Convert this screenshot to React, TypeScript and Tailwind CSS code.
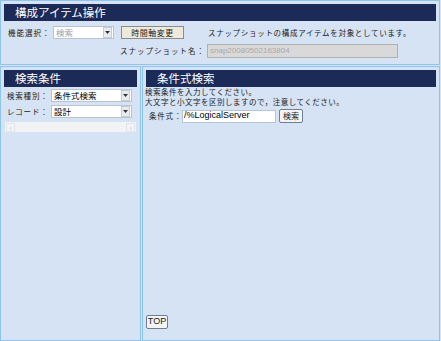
import React from "react";

const jp = { fontFamily: '"Noto Sans CJK JP", "Noto Sans", sans-serif' };
const lat = { fontFamily: '"Liberation Sans", Arial, sans-serif' };

function Select({ value, w, disabled }: { value: string; w: string; disabled?: boolean }) {
  return (
    <div className={`flex h-[13px] shrink-0 items-center border border-[#b8c4d2] bg-white ${w}`}>
      <span className={`flex-1 overflow-hidden pl-[2px] text-[8.5px] leading-[11px] ${disabled ? "text-[#a0a0a0]" : "text-black"}`}>{value}</span>
      <span className="mr-[1px] flex h-[11px] w-[9px] items-center justify-center border border-[#c5ccd6] bg-[#e8ebef]">
        <svg width="5" height="3" viewBox="0 0 5 3"><path d="M0 0h5L2.5 3z" fill="#333" /></svg>
      </span>
    </div>
  );
}

function Header({ title }: { title: string }) {
  return (
    <div className="mx-[3px] mt-[3px] flex h-[17px] items-center bg-[#1c2a57] pl-[11px] text-[11.5px] leading-none text-white">
      {title}
    </div>
  );
}

export default function App() {
  return (
    <div className="h-[341px] w-[441px] overflow-hidden bg-[#d5e3f4] text-[8px] text-[#222]" style={jp}>
      {/* top panel */}
      <div className="h-[65px] w-[440px] border border-[#8ec5ee]">
        <Header title="構成アイテム操作" />
        <div className="mt-[5px] flex items-center whitespace-nowrap">
          <span className="ml-[7px] w-[45px] shrink-0 text-[7.5px] tracking-[1px]">機能選択：</span>
          <Select value="検索" w="w-[61px]" disabled />
          <div className="ml-[7px] flex h-[13px] w-[63px] shrink-0 items-center justify-center border border-[#8c8c8c] bg-[#efe9da] text-[8px] tracking-[0.5px]">時間軸変更</div>
          <span className="ml-[24px] text-[7.5px] tracking-[0.7px]">スナップショットの構成アイテムを対象としています。</span>
        </div>
        <div className="mt-[5px] flex items-center whitespace-nowrap">
          <span className="ml-[119px] w-[87px] shrink-0 text-[7.5px] tracking-[1px]">スナップショット名：</span>
          <div className="flex h-[14px] w-[191px] shrink-0 items-center border border-[#b0b0b0] bg-[#d9d9d9] pl-[2px] text-[8px] text-[#a9a9a9]" style={lat}>
            snap20080502163804
          </div>
        </div>
      </div>
      {/* bottom */}
      <div className="mt-[1px] flex h-[275px]">
        <div className="h-full w-[141px] shrink-0 border border-[#8ec5ee]">
          <Header title="検索条件" />
          <div className="mt-[2px] flex items-center whitespace-nowrap">
            <span className="ml-[6px] w-[44px] shrink-0 text-[7.5px] tracking-[0.8px]">検索種別：</span>
            <Select value="条件式検索" w="w-[81px]" />
          </div>
          <div className="mt-[3px] flex items-center whitespace-nowrap">
            <span className="ml-[6px] w-[44px] shrink-0 text-[7.5px] tracking-[0.8px]">レコード：</span>
            <Select value="設計" w="w-[81px]" />
          </div>
          <div className="mx-[4px] mt-[4px] flex h-[10px] items-center justify-between bg-[#f1f3f5]">
            <span className="ml-[1px] flex h-[9px] w-[9px] items-center justify-center border border-[#e2e6ea] text-[7px] leading-none text-[#c0c0c0]">‹</span>
            <span className="mr-[1px] flex h-[9px] w-[9px] items-center justify-center border border-[#e2e6ea] text-[7px] leading-none text-[#c0c0c0]">›</span>
          </div>
        </div>
        <div className="ml-[1px] flex h-full w-[298px] flex-col border border-[#8ec5ee]">
          <Header title="条件式検索" />
          <div className="whitespace-nowrap pl-[2px] text-[7.5px] leading-[10px] tracking-[0.5px]">
            <div>検索条件を入力してください。</div>
            <div>大文字と小文字を区別しますので，注意してください。</div>
          </div>
          <div className="mt-[2px] flex items-center whitespace-nowrap">
            <span className="ml-[6px] w-[33px] shrink-0 text-[7.5px] tracking-[0.8px]">条件式：</span>
            <div className="flex h-[13px] w-[94px] shrink-0 items-center border border-[#b8c4d2] bg-white pl-[1px] text-[9px] text-black" style={lat}>
              /%LogicalServer
            </div>
            <div className="ml-[3px] flex h-[14px] w-[24px] shrink-0 items-center justify-center rounded-[2px] border border-[#6a7f99] bg-[#f4f4f2] text-[8px]">検索</div>
          </div>
          <div className="flex-1" />
          <div className="mb-[11px] ml-[3px] flex h-[14px] w-[22px] items-center justify-center rounded-[2px] border border-[#6a7f99] bg-[#f4f4f2] text-[9px]" style={lat}>
            TOP
          </div>
        </div>
      </div>
    </div>
  );
}
